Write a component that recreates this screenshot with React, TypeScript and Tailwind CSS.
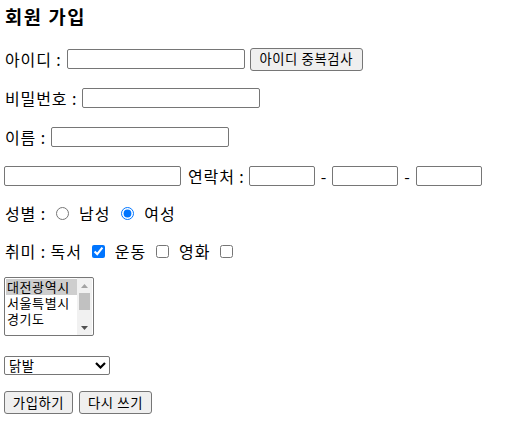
import React from 'react'

const App: React.FC = () => {
  const inputCls = "h-[20px] border border-[#767676] rounded-[2px] bg-white px-[2px] text-[13.33px]";
  const btnCls = "h-[23px] border border-[#767676] rounded-[3px] bg-[#efefef] px-[6px] text-[13.33px] leading-none text-black tracking-[0.6px]";

  return (
    <div className="min-h-screen w-full bg-white text-black pl-[4px] text-[16px] tracking-[0.9px] font-['Noto_Sans_CJK_KR',sans-serif]">
      {/* 제목 */}
      <div className="h-[32px] flex items-center">
        <h3 className="text-[18.72px] font-bold pl-[1px] tracking-[1.6px]">회원 가입</h3>
      </div>

      {/* 아이디 */}
      <div className="flex items-center h-[22px] mt-[16px]">
        <span className="pl-[1px]">아이디 :</span>
        <input type="text" className={`${inputCls} ml-[5px] w-[178px]`} />
        <button className={`${btnCls} ml-[5px] w-[113px] h-[22px]`}>아이디 중복검사</button>
      </div>

      {/* 비밀번호 */}
      <div className="flex items-center h-[22px] mt-[17px]">
        <span className="pl-[1px]">비밀번호 :</span>
        <input type="password" className={`${inputCls} ml-[5px] w-[178px]`} />
      </div>

      {/* 이름 */}
      <div className="flex items-center h-[22px] mt-[17px]">
        <span className="pl-[1px]">이름 :</span>
        <input type="text" className={`${inputCls} ml-[5px] w-[178px]`} />
      </div>

      {/* 연락처 */}
      <div className="flex items-center h-[22px] mt-[17px]">
        <input type="text" className={`${inputCls} w-[177px]`} />
        <span className="ml-[7px]">연락처 :</span>
        <input type="text" className={`${inputCls} ml-[4px] w-[66px]`} />
        <span className="mx-[6px] tracking-normal">-</span>
        <input type="text" className={`${inputCls} w-[66px]`} />
        <span className="mx-[6px] tracking-normal">-</span>
        <input type="text" className={`${inputCls} w-[66px]`} />
      </div>

      {/* 성별 */}
      <div className="flex items-center h-[22px] mt-[15px]">
        <span className="pl-[1px]">성별 :</span>
        <input type="radio" name="gender" className="m-0 ml-[10px] w-[13px] h-[13px]" />
        <span className="ml-[10px]">남성</span>
        <input type="radio" name="gender" defaultChecked className="m-0 ml-[11px] w-[13px] h-[13px]" />
        <span className="ml-[10px]">여성</span>
      </div>

      {/* 취미 */}
      <div className="flex items-center h-[22px] mt-[16px]">
        <span className="pl-[1px]">취미 : 독서</span>
        <input type="checkbox" defaultChecked className="m-0 ml-[10px] w-[13px] h-[13px]" />
        <span className="ml-[10px]">운동</span>
        <input type="checkbox" className="m-0 ml-[10px] w-[13px] h-[13px]" />
        <span className="ml-[10px]">영화</span>
        <input type="checkbox" className="m-0 ml-[10px] w-[13px] h-[13px]" />
      </div>

      {/* 지역 목록 */}
      <div className="mt-[15px] w-[90px] h-[59px] border border-[#767676] rounded-[2px] bg-white flex text-[13px] tracking-[0.6px]">
        <div className="flex-1 flex flex-col pt-[1px] pl-[1px]">
          <div className="h-[16px] leading-[16px] bg-[#cecece] px-[1px]">대전광역시</div>
          <div className="h-[16px] leading-[16px] px-[1px]">서울특별시</div>
          <div className="h-[16px] leading-[16px] px-[1px]">경기도</div>
        </div>
        <div className="w-[15px] bg-[#f1f1f1] flex flex-col mr-[1px]">
          <div className="h-[15px] flex items-center justify-center">
            <svg width="7" height="4" viewBox="0 0 7 4"><path d="M3.5 0 L7 4 L0 4 Z" fill="#a3a3a3" /></svg>
          </div>
          <div className="flex-1 flex flex-col">
            <div className="mx-[2px] h-[17px] bg-[#c1c1c1]" />
          </div>
          <div className="h-[15px] flex items-center justify-center">
            <svg width="7" height="4" viewBox="0 0 7 4"><path d="M0 0 L7 0 L3.5 4 Z" fill="#505050" /></svg>
          </div>
        </div>
      </div>

      {/* 음식 선택 */}
      <div className="mt-[20px] w-[106px] h-[19px] border border-[#767676] rounded-[2px] bg-white flex items-center justify-between pl-[4px] pr-[3px] text-[13.33px] tracking-[0.5px]">
        <span>닭발</span>
        <svg width="11" height="7" viewBox="0 0 11 7">
          <path d="M1 1 L5.5 5.5 L10 1" fill="none" stroke="#000" strokeWidth="2.2" />
        </svg>
      </div>

      {/* 버튼 */}
      <div className="flex items-center mt-[16px] gap-[6px]">
        <button className={`${btnCls} w-[69px]`}>가입하기</button>
        <button className={`${btnCls} w-[73px]`}>다시 쓰기</button>
      </div>
    </div>
  );
}

export default App
